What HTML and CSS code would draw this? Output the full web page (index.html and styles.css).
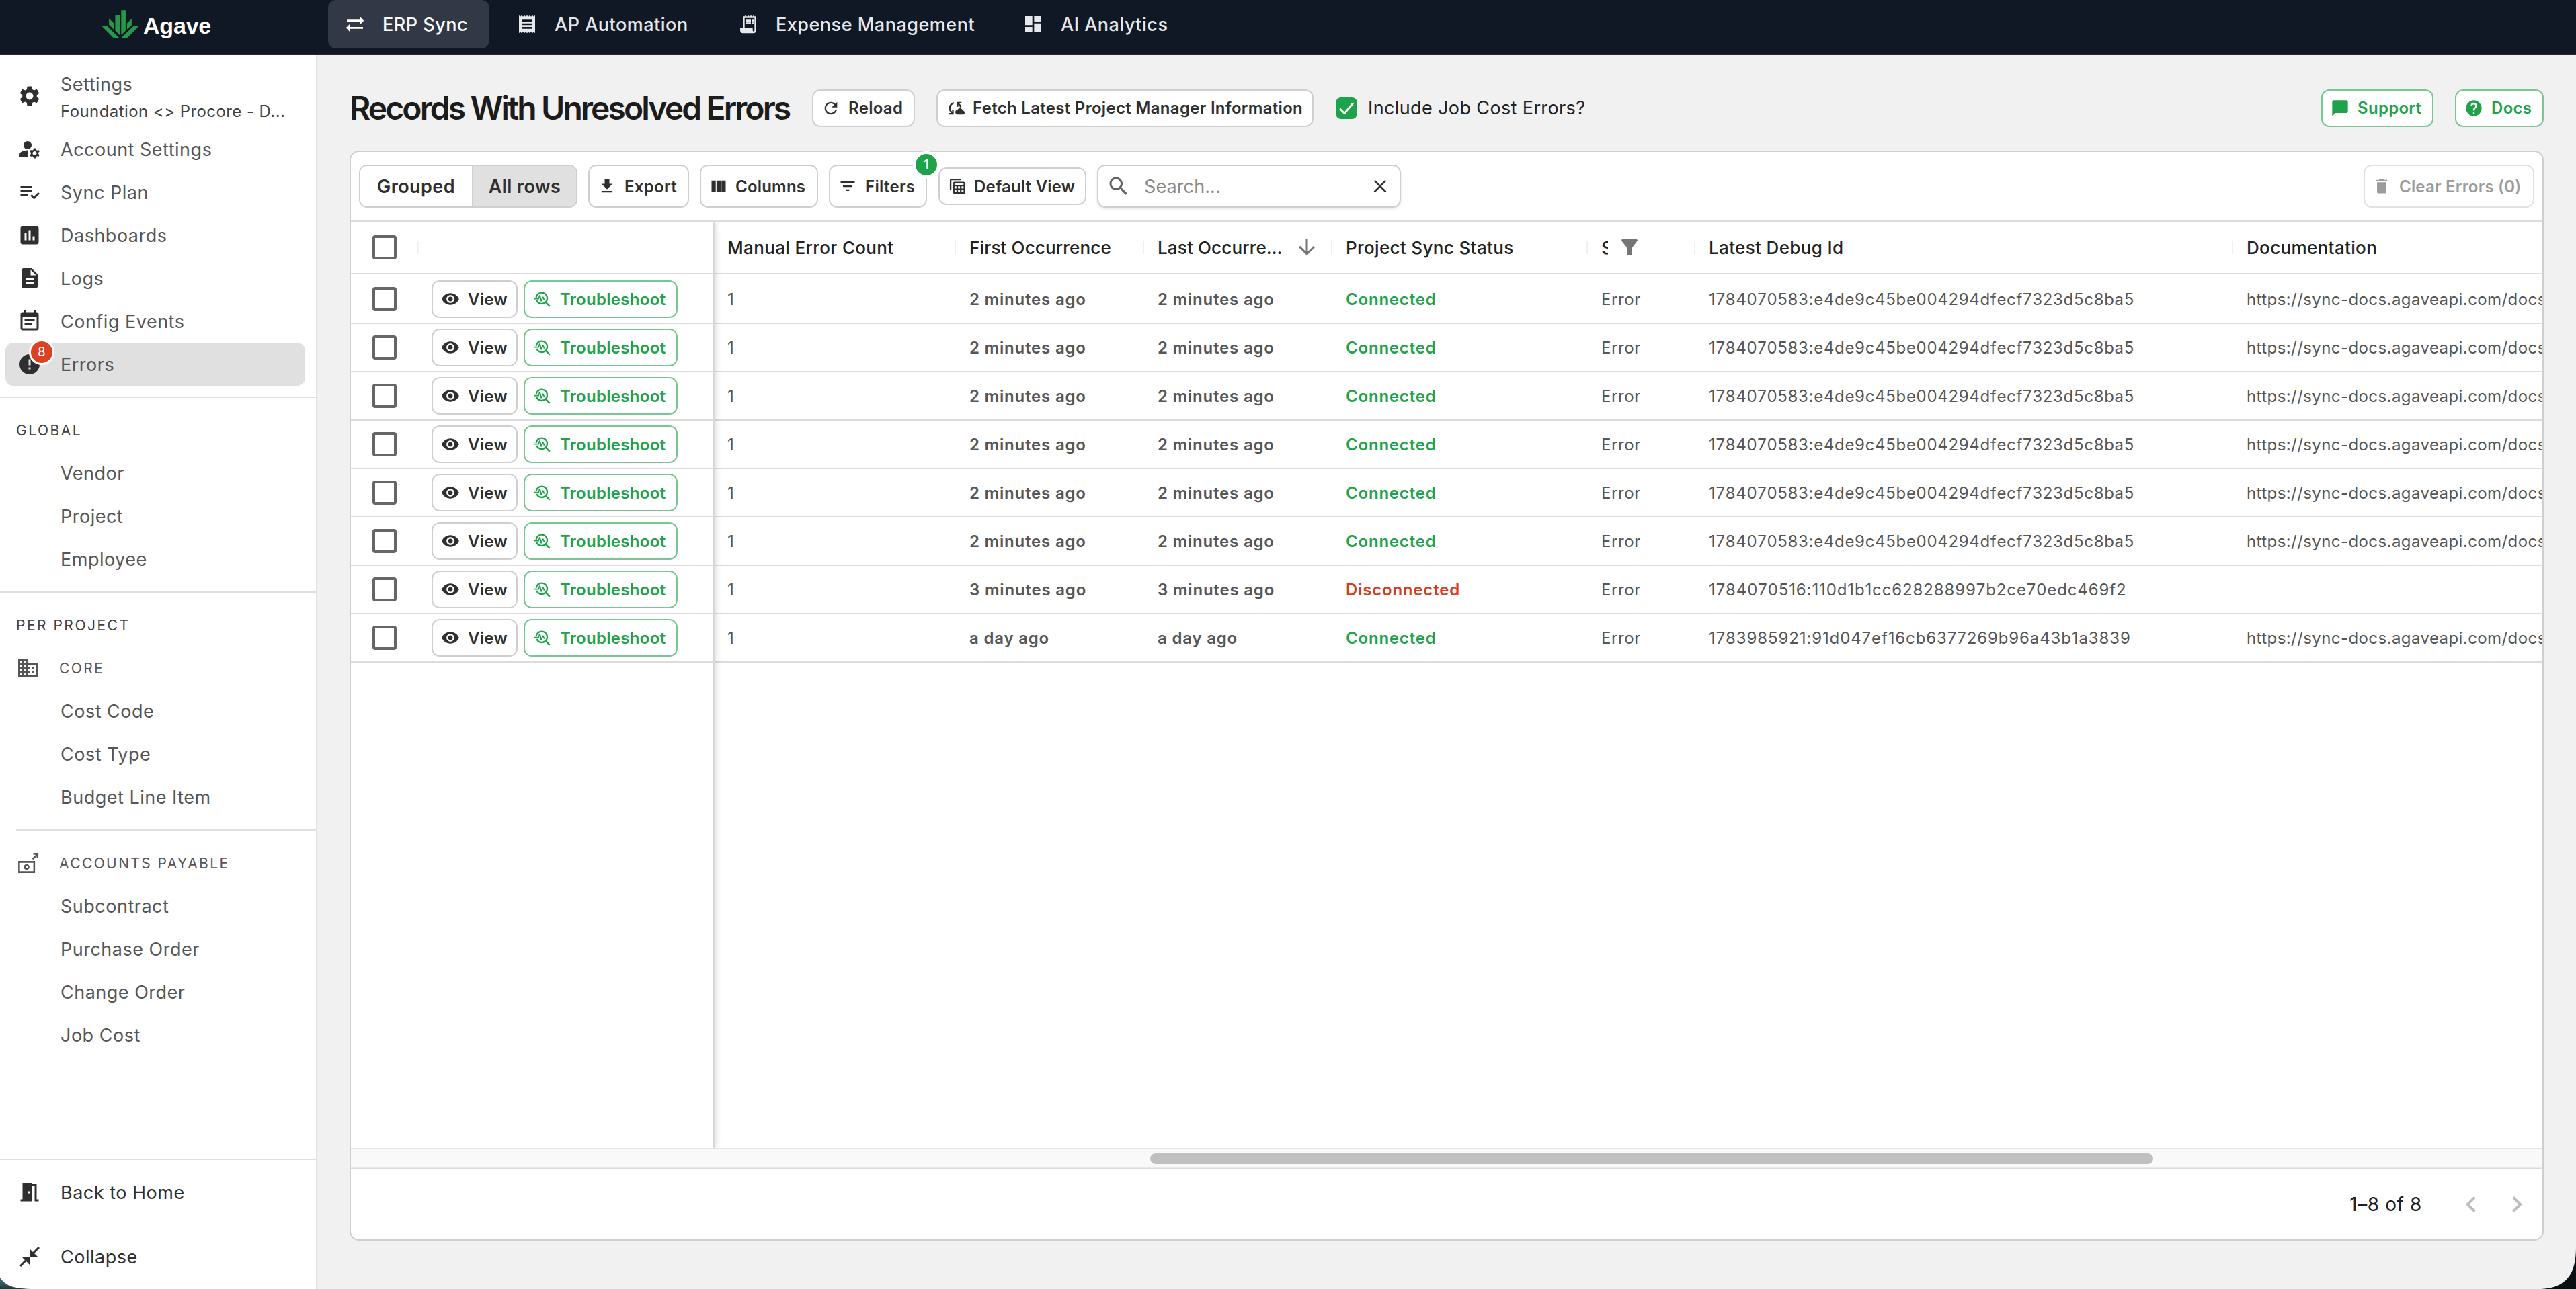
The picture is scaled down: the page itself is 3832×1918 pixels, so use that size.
FILE: index.html
```html
<!DOCTYPE html>
<html lang="en">
<head>
<meta charset="utf-8">
<title>Agave - Errors</title>
<link rel="stylesheet" href="styles.css">
</head>
<body>
<svg class="sprite" aria-hidden="true">
  <symbol id="i-sync" viewBox="0 0 24 24"><path d="M22 8l-4-4v3H3v2h15v3l4-4zM2 16l4 4v-3h15v-2H6v-3l-4 4z"/></symbol>
  <symbol id="i-receipt" viewBox="0 0 24 24"><path d="M18 17H6v-2h12v2zm0-4H6v-2h12v2zm0-4H6V7h12v2zM3 22l1.5-1.5L6 22l1.5-1.5L9 22l1.5-1.5L12 22l1.5-1.5L15 22l1.5-1.5L18 22l1.5-1.5L21 22V2l-1.5 1.5L18 2l-1.5 1.5L15 2l-1.5 1.5L12 2l-1.5 1.5L9 2 7.5 3.5 6 2 4.5 3.5 3 2v20z"/></symbol>
  <symbol id="i-receipt-long" viewBox="0 0 24 24"><path d="M19.5 3.5 18 2l-1.5 1.5L15 2l-1.5 1.5L12 2l-1.5 1.5L9 2 7.5 3.5 6 2v14H3v3c0 1.66 1.34 3 3 3h12c1.66 0 3-1.34 3-3V2l-1.5 1.5zM19 19c0 .55-.45 1-1 1s-1-.45-1-1v-3H8V5h11v14z"/><path d="M9 7h6v2H9zm7 0h2v2h-2zm-7 3h6v2H9zm7 0h2v2h-2z"/></symbol>
  <symbol id="i-dashboard" viewBox="0 0 24 24"><path d="M3 13h8V3H3v10zm0 8h8v-6H3v6zm10 0h8V11h-8v10zm0-18v6h8V3h-8z"/></symbol>
  <symbol id="i-settings" viewBox="0 0 24 24"><path d="M19.14 12.94c.04-.3.06-.61.06-.94 0-.32-.02-.64-.07-.94l2.03-1.58c.18-.14.23-.41.12-.61l-1.92-3.32c-.12-.22-.37-.29-.59-.22l-2.39.96c-.5-.38-1.03-.7-1.62-.94l-.36-2.54c-.04-.24-.24-.41-.48-.41h-3.84c-.24 0-.43.17-.47.41l-.36 2.54c-.59.24-1.13.57-1.62.94l-2.39-.96c-.22-.08-.47 0-.59.22L2.74 8.87c-.12.21-.08.47.12.61l2.03 1.58c-.05.3-.09.63-.09.94s.02.64.07.94l-2.03 1.58c-.18.14-.23.41-.12.61l1.92 3.32c.12.22.37.29.59.22l2.39-.96c.5.38 1.03.7 1.62.94l.36 2.54c.05.24.24.41.48.41h3.84c.24 0 .44-.17.47-.41l.36-2.54c.59-.24 1.13-.56 1.62-.94l2.39.96c.22.08.47 0 .59-.22l1.92-3.32c.12-.22.07-.47-.12-.61l-2.01-1.58zM12 15.6c-1.98 0-3.6-1.62-3.6-3.6s1.62-3.6 3.6-3.6 3.6 1.62 3.6 3.6-1.62 3.6-3.6 3.6z"/></symbol>
  <symbol id="i-account" viewBox="0 0 24 24"><circle cx="10" cy="8" r="4"/><path d="M10.67 13.02C10.45 13.01 10.23 13 10 13c-2.42 0-4.68.67-6.61 1.82-.88.52-1.39 1.5-1.39 2.53V20h9.26c-.79-1.13-1.26-2.51-1.26-4 0-1.07.25-2.07.67-2.98zM20.75 16c0-.22-.03-.42-.06-.63l1.14-1.01-1-1.73-1.45.49c-.32-.27-.68-.48-1.08-.63L18 11h-2l-.3 1.49c-.4.15-.76.36-1.08.63l-1.45-.49-1 1.73 1.14 1.01c-.03.21-.06.41-.06.63s.03.42.06.63l-1.14 1.01 1 1.73 1.45-.49c.32.27.68.48 1.08.63L16 21h2l.3-1.49c.4-.15.76-.36 1.08-.63l1.45.49 1-1.73-1.14-1.01c.03-.21.06-.41.06-.63zM17 18c-1.1 0-2-.9-2-2s.9-2 2-2 2 .9 2 2-.9 2-2 2z"/></symbol>
  <symbol id="i-plan" viewBox="0 0 24 24"><path d="M3 10h11v2H3zm0-4h11v2H3zm0 8h7v2H3zm17.59-2.07-4.25 4.24-2.12-2.12-1.41 1.41L16.34 19 22 13.34z"/></symbol>
  <symbol id="i-chart" viewBox="0 0 24 24"><path d="M19 3H5c-1.1 0-2 .9-2 2v14c0 1.1.9 2 2 2h14c1.1 0 2-.9 2-2V5c0-1.1-.9-2-2-2zM9 17H7v-7h2v7zm4 0h-2V7h2v10zm4 0h-2v-4h2v4z"/></symbol>
  <symbol id="i-doc" viewBox="0 0 24 24"><path d="M14 2H6c-1.1 0-1.99.9-1.99 2L4 20c0 1.1.89 2 1.99 2H18c1.1 0 2-.9 2-2V8l-6-6zm2 16H8v-2h8v2zm0-4H8v-2h8v2zm-3-5V3.5L18.5 9H13z"/></symbol>
  <symbol id="i-event" viewBox="0 0 24 24"><path d="M17 10H7v2h10v-2zm2-7h-1V1h-2v2H8V1H6v2H5c-1.11 0-1.99.9-1.99 2L3 19c0 1.1.89 2 2 2h14c1.1 0 2-.9 2-2V5c0-1.1-.9-2-2-2zm0 16H5V8h14v11zm-5-5H7v2h7v-2z"/></symbol>
  <symbol id="i-error" viewBox="0 0 24 24"><path d="M12 2C6.48 2 2 6.48 2 12s4.48 10 10 10 10-4.48 10-10S17.52 2 12 2zm1 15h-2v-2h2v2zm0-4h-2V7h2v6z"/></symbol>
  <symbol id="i-domain" viewBox="0 0 24 24"><path d="M12 7V3H2v18h20V7H12zM6 19H4v-2h2v2zm0-4H4v-2h2v2zm0-4H4V9h2v2zm0-4H4V5h2v2zm4 12H8v-2h2v2zm0-4H8v-2h2v2zm0-4H8V9h2v2zm0-4H8V5h2v2zm10 12h-8v-2h2v-2h-2v-2h2v-2h-2V9h8v10zm-2-8h-2v2h2v-2zm0 4h-2v2h2v-2z"/></symbol>
  <symbol id="i-payable" viewBox="0 0 24 24"><g fill="none" stroke="currentColor" stroke-width="1.7"><path d="M2.9 10.9h15v10.2h-15z"/><circle cx="10.4" cy="16" r="2"/><path d="M16.3 8.2l4.6-4.6M17 2.9h4.2v4.4"/></g></symbol>
  <symbol id="i-door" viewBox="0 0 24 24"><path d="M14 6v15H3v-2h2V3h9v1h5v15h2v2h-4V6h-3zm-4 5v2h2v-2h-2z"/></symbol>
  <symbol id="i-collapse" viewBox="0 0 24 24"><path d="M22 3.41 16.71 8.7 20 12h-8V4l3.29 3.29L20.59 2 22 3.41zM3.41 22l5.29-5.29L12 20v-8H4l3.29 3.29L2 20.59 3.41 22z"/></symbol>
  <symbol id="i-refresh" viewBox="0 0 24 24"><path d="M17.65 6.35C16.2 4.9 14.21 4 12 4c-4.42 0-7.99 3.58-7.99 8s3.57 8 7.99 8c3.73 0 6.84-2.55 7.73-6h-2.08c-.82 2.33-3.04 4-5.65 4-3.31 0-6-2.69-6-6s2.69-6 6-6c1.66 0 3.14.69 4.22 1.78L13 11h7V4l-2.35 2.35z"/></symbol>
  <symbol id="i-cloud-sync" viewBox="0 0 24 24"><path d="M21.5 14.98c-.02 0-.03 0-.05.01C21.2 13.3 19.76 12 18 12c-1.4 0-2.6.83-3.16 2.02C13.26 14.1 12 15.4 12 17c0 1.66 1.34 3 3 3l6.5-.02c1.38 0 2.5-1.12 2.5-2.5s-1.12-2.5-2.5-2.5zM10 4.26v2.09C7.67 7.18 6 9.39 6 12c0 1.77.78 3.34 2 4.44V14h2v6H4v-2h2.73C5.06 16.54 4 14.4 4 12c0-3.73 2.55-6.85 6-7.74zM20 6h-2.73c1.43 1.26 2.41 3.01 2.66 5h-2.02c-.23-1.36-.93-2.55-1.91-3.44V10h-2V4h6v2z"/></symbol>
  <symbol id="i-check" viewBox="0 0 32 32"><path d="M7 17.5l6 6L25.5 9" fill="none" stroke="#fff" stroke-width="2.8" stroke-linecap="round" stroke-linejoin="round"/></symbol>
  <symbol id="i-download" viewBox="0 0 24 24"><path d="M19 9h-4V3H9v6H5l7 7 7-7zM5 18v2h14v-2H5z"/></symbol>
  <symbol id="i-columns" viewBox="0 0 24 24"><path d="M14.67 5v14H9.33V5h5.34zm1 14H21V5h-5.33v14zm-7.34 0V5H3v14h5.33z"/></symbol>
  <symbol id="i-filter" viewBox="0 0 24 24"><path d="M10 18h4v-2h-4v2zM3 6v2h18V6H3zm3 7h12v-2H6v2z"/></symbol>
  <symbol id="i-view" viewBox="0 0 24 24"><path d="M2.5 4.5c0-1.1.9-2 2-2H17v2H4.500v12.500h-2z"/><path fill-rule="evenodd" d="M8.500 6.500H20c1 0 1.800.8 1.800 1.800V20c0 1-.8 1.800-1.800 1.800H8.500c-1 0-1.800-.8-1.800-1.800V8.300c0-1 .8-1.800 1.800-1.800zM8.500 8.300v2H20v-2zM8.500 12.300v2.800H11v-2.800zM13 12.300v2.800h2.500v-2.800zM17.500 12.300v2.800H20v-2.800zM8.500 17v2.800H11V17zM13 17v2.800h2.500V17zM17.500 17v2.800H20V17z"/></symbol>
  <symbol id="i-search" viewBox="0 0 24 24"><path d="M15.5 14h-.79l-.28-.27C15.41 12.59 16 11.11 16 9.5 16 5.91 13.09 3 9.5 3S3 5.91 3 9.5 5.91 16 9.5 16c1.61 0 3.09-.59 4.23-1.57l.27.28v.79l5 4.99L20.49 19l-4.99-5zm-6 0C7.01 14 5 11.99 5 9.5S7.01 5 9.5 5 14 7.01 14 9.5 11.99 14 9.5 14z"/></symbol>
  <symbol id="i-close" viewBox="0 0 24 24"><path d="M19 6.41 17.59 5 12 10.59 6.41 5 5 6.41 10.59 12 5 17.59 6.41 19 12 13.41 17.59 19 19 17.59 13.41 12z"/></symbol>
  <symbol id="i-trash" viewBox="0 0 24 24"><path d="M6 19c0 1.1.9 2 2 2h8c1.1 0 2-.9 2-2V7H6v12zM19 4h-3.5l-1-1h-5l-1 1H5v2h14V4z"/></symbol>
  <symbol id="i-chat" viewBox="0 0 24 24"><path d="M20 2H4c-1.1 0-2 .9-2 2v18l4-4h14c1.1 0 2-.9 2-2V4c0-1.1-.9-2-2-2z"/></symbol>
  <symbol id="i-help" viewBox="0 0 24 24"><path d="M12 2C6.48 2 2 6.48 2 12s4.48 10 10 10 10-4.48 10-10S17.52 2 12 2zm1 17h-2v-2h2v2zm2.07-7.75-.9.92C13.45 12.9 13 13.5 13 15h-2v-.5c0-1.1.45-2.1 1.17-2.83l1.24-1.26c.37-.36.59-.86.59-1.41 0-1.1-.9-2-2-2s-2 .9-2 2H8c0-2.21 1.79-4 4-4s4 1.79 4 4c0 .88-.36 1.68-.93 2.25z"/></symbol>
  <symbol id="i-eye" viewBox="0 0 24 24"><path d="M12 4.5C7 4.5 2.73 7.61 1 12c1.73 4.39 6 7.5 11 7.5s9.27-3.11 11-7.5c-1.73-4.39-6-7.5-11-7.5zM12 17c-2.76 0-5-2.24-5-5s2.24-5 5-5 5 2.24 5 5-2.24 5-5 5zm0-8c-1.66 0-3 1.34-3 3s1.34 3 3 3 3-1.34 3-3-1.34-3-3-3z"/></symbol>
  <symbol id="i-trouble" viewBox="0 0 24 24"><path d="M22 20.59l-4.69-4.69C18.37 14.55 19 12.85 19 11c0-4.42-3.58-8-8-8-4.08 0-7.44 3.05-7.93 7h2.02C5.57 7.17 8.03 5 11 5c3.31 0 6 2.69 6 6s-2.69 6-6 6c-2.42 0-4.5-1.44-5.45-3.5H3.4C4.45 16.69 7.46 19 11 19c1.85 0 3.55-.63 4.9-1.69L20.59 22 22 20.59z"/><path d="M8.43 9.69 9.65 15h1.64l1.26-3.78.95 2.28h2V12h-1l-1.25-3h-1.54l-1.12 3.37L9.35 7H7.7l-1.25 4H1v1.5h6.55l.88-2.81z"/></symbol>
  <symbol id="i-down" viewBox="0 0 24 24"><path d="M20 12l-1.41-1.41L13 16.17V4h-2v12.170l-5.580-5.590L4 12l8 8 8-8z"/></symbol>
  <symbol id="i-funnel" viewBox="0 0 24 24"><path d="M4.25 5.61C6.27 8.2 10 13 10 13v6c0 .55.45 1 1 1h2c.55 0 1-.45 1-1v-6s3.72-4.8 5.74-7.39c.51-.66.04-1.61-.79-1.61H5.04c-.83 0-1.3.95-.79 1.61z"/></symbol>
  <symbol id="i-left" viewBox="0 0 24 24"><path d="M15.41 7.41 14 6l-6 6 6 6 1.410-1.410L10.830 12z"/></symbol>
  <symbol id="i-right" viewBox="0 0 24 24"><path d="M10 6 8.590 7.410 13.170 12l-4.580 4.590L10 18l6-6z"/></symbol>
</svg>

<header class="topbar">
  <div class="brand">
    <svg class="brand-mark" viewBox="33 26 168 127"><path d="M121 27h20v91l-20 20zM94 49h20v89l-20-20zM66 63l21 21v28L66 92zM168 65v29l-21 18V85zM33 97h24l55 54H86zM201 97h-24l-56 54h27z"/></svg>
    <span class="brand-name">Agave</span>
  </div>
  <nav class="tabs">
    <a class="tab tab-erp active"><svg class="ic32"><use href="#i-sync"/></svg>ERP Sync</a>
    <a class="tab tab-ap"><svg class="ic32"><use href="#i-receipt"/></svg>AP Automation</a>
    <a class="tab tab-expense"><svg class="ic32"><use href="#i-receipt-long"/></svg>Expense Management</a>
    <a class="tab tab-ai"><svg class="ic32"><use href="#i-dashboard"/></svg>AI Analytics</a>
  </nav>
</header>

<div class="shell">
  <aside class="sidebar">
    <div class="nav-main">
      <a class="nav-item nav-settings"><svg class="ic36"><use href="#i-settings"/></svg><span class="nav-stack"><span>Settings</span><span class="nav-sub">Foundation &lt;&gt; Procore - D...</span></span></a>
      <a class="nav-item"><svg class="ic36"><use href="#i-account"/></svg>Account Settings</a>
      <a class="nav-item"><svg class="ic36"><use href="#i-plan"/></svg>Sync Plan</a>
      <a class="nav-item"><svg class="ic36"><use href="#i-chart"/></svg>Dashboards</a>
      <a class="nav-item"><svg class="ic36"><use href="#i-doc"/></svg>Logs</a>
      <a class="nav-item"><svg class="ic36"><use href="#i-event"/></svg>Config Events</a>
      <a class="nav-item selected"><svg class="ic36"><use href="#i-error"/></svg>Errors<span class="nav-badge">8</span></a>
    </div>
    <section class="group">
      <h2 class="group-title">GLOBAL</h2>
      <a class="nav-item plain">Vendor</a>
      <a class="nav-item plain">Project</a>
      <a class="nav-item plain">Employee</a>
    </section>
    <section class="group">
      <h2 class="group-title">PER PROJECT</h2>
      <h3 class="sub-title"><svg class="ic36"><use href="#i-domain"/></svg>CORE</h3>
      <a class="nav-item plain">Cost Code</a>
      <a class="nav-item plain">Cost Type</a>
      <a class="nav-item plain">Budget Line Item</a>
      <h3 class="sub-title ruled"><svg class="ic36"><use href="#i-payable"/></svg>ACCOUNTS PAYABLE</h3>
      <a class="nav-item plain">Subcontract</a>
      <a class="nav-item plain">Purchase Order</a>
      <a class="nav-item plain">Change Order</a>
      <a class="nav-item plain">Job Cost</a>
    </section>
    <div class="nav-foot">
      <a class="nav-item dark"><svg class="ic36"><use href="#i-door"/></svg>Back to Home</a>
      <a class="nav-item dark"><svg class="ic36"><use href="#i-collapse"/></svg>Collapse</a>
    </div>
  </aside>

  <main class="main">
    <div class="page-head">
      <h1 class="page-title">Records With Unresolved Errors</h1>
      <button class="btn w-reload"><svg class="ic28"><use href="#i-refresh"/></svg>Reload</button>
      <button class="btn w-fetch"><svg class="ic28"><use href="#i-cloud-sync"/></svg>Fetch Latest Project Manager Information</button>
      <label class="check-label"><svg class="check-on"><use href="#i-check"/></svg>Include Job Cost Errors?</label>
      <button class="btn green w-support"><svg class="ic28"><use href="#i-chat"/></svg>Support</button>
      <button class="btn green w-docs"><svg class="ic28"><use href="#i-help"/></svg>Docs</button>
    </div>

    <div class="card">
      <div class="toolbar">
        <div class="segmented"><button class="seg">Grouped</button><button class="seg on">All rows</button></div>
        <button class="btn tall w-export"><svg class="ic28"><use href="#i-download"/></svg>Export</button>
        <button class="btn tall w-columns"><svg class="ic28"><use href="#i-columns"/></svg>Columns</button>
        <button class="btn tall w-filters"><svg class="ic28"><use href="#i-filter"/></svg>Filters<span class="count">1</span></button>
        <button class="btn w-view"><svg class="ic28"><use href="#i-view"/></svg>Default View</button>
        <div class="search"><svg class="ic36"><use href="#i-search"/></svg><span class="placeholder">Search...</span><svg class="ic32"><use href="#i-close"/></svg></div>
        <button class="btn tall disabled w-clear"><svg class="ic28"><use href="#i-trash"/></svg>Clear Errors (0)</button>
      </div>

      <div class="grid">
        <div class="pinned">
          <div class="row head"><span class="box"></span><span class="tick"></span></div>
          <div class="row"><span class="box"></span><button class="btn w-eye"><svg class="ic28"><use href="#i-eye"/></svg>View</button><button class="btn green w-trouble"><svg class="ic28"><use href="#i-trouble"/></svg>Troubleshoot</button></div>
          <div class="row"><span class="box"></span><button class="btn w-eye"><svg class="ic28"><use href="#i-eye"/></svg>View</button><button class="btn green w-trouble"><svg class="ic28"><use href="#i-trouble"/></svg>Troubleshoot</button></div>
          <div class="row"><span class="box"></span><button class="btn w-eye"><svg class="ic28"><use href="#i-eye"/></svg>View</button><button class="btn green w-trouble"><svg class="ic28"><use href="#i-trouble"/></svg>Troubleshoot</button></div>
          <div class="row"><span class="box"></span><button class="btn w-eye"><svg class="ic28"><use href="#i-eye"/></svg>View</button><button class="btn green w-trouble"><svg class="ic28"><use href="#i-trouble"/></svg>Troubleshoot</button></div>
          <div class="row"><span class="box"></span><button class="btn w-eye"><svg class="ic28"><use href="#i-eye"/></svg>View</button><button class="btn green w-trouble"><svg class="ic28"><use href="#i-trouble"/></svg>Troubleshoot</button></div>
          <div class="row"><span class="box"></span><button class="btn w-eye"><svg class="ic28"><use href="#i-eye"/></svg>View</button><button class="btn green w-trouble"><svg class="ic28"><use href="#i-trouble"/></svg>Troubleshoot</button></div>
          <div class="row"><span class="box"></span><button class="btn w-eye"><svg class="ic28"><use href="#i-eye"/></svg>View</button><button class="btn green w-trouble"><svg class="ic28"><use href="#i-trouble"/></svg>Troubleshoot</button></div>
          <div class="row"><span class="box"></span><button class="btn w-eye"><svg class="ic28"><use href="#i-eye"/></svg>View</button><button class="btn green w-trouble"><svg class="ic28"><use href="#i-trouble"/></svg>Troubleshoot</button></div>
        </div>
        <div class="scroller">
          <div class="cells head">
            <span class="th">Manual Error Count</span><span class="th th-tight">First Occurrence</span><span class="th th-tight">Last Occurre…<svg class="ic36 th-sort"><use href="#i-down"/></svg></span><span class="th">Project Sync Status</span><span class="th"><span class="cut">S</span><svg class="ic36 th-funnel"><use href="#i-funnel"/></svg></span><span class="th">Latest Debug Id</span><span class="th last">Documentation</span>
          </div>
          <div class="cells"><span>1</span><b>2 minutes ago</b><b>2 minutes ago</b><b class="ok">Connected</b><span>Error</span><span class="debug">1784070583:e4de9c45be004294dfecf7323d5c8ba5</span><span class="url">https://sync-docs.agaveapi.com/docs</span></div>
          <div class="cells"><span>1</span><b>2 minutes ago</b><b>2 minutes ago</b><b class="ok">Connected</b><span>Error</span><span class="debug">1784070583:e4de9c45be004294dfecf7323d5c8ba5</span><span class="url">https://sync-docs.agaveapi.com/docs</span></div>
          <div class="cells"><span>1</span><b>2 minutes ago</b><b>2 minutes ago</b><b class="ok">Connected</b><span>Error</span><span class="debug">1784070583:e4de9c45be004294dfecf7323d5c8ba5</span><span class="url">https://sync-docs.agaveapi.com/docs</span></div>
          <div class="cells"><span>1</span><b>2 minutes ago</b><b>2 minutes ago</b><b class="ok">Connected</b><span>Error</span><span class="debug">1784070583:e4de9c45be004294dfecf7323d5c8ba5</span><span class="url">https://sync-docs.agaveapi.com/docs</span></div>
          <div class="cells"><span>1</span><b>2 minutes ago</b><b>2 minutes ago</b><b class="ok">Connected</b><span>Error</span><span class="debug">1784070583:e4de9c45be004294dfecf7323d5c8ba5</span><span class="url">https://sync-docs.agaveapi.com/docs</span></div>
          <div class="cells"><span>1</span><b>2 minutes ago</b><b>2 minutes ago</b><b class="ok">Connected</b><span>Error</span><span class="debug">1784070583:e4de9c45be004294dfecf7323d5c8ba5</span><span class="url">https://sync-docs.agaveapi.com/docs</span></div>
          <div class="cells"><span>1</span><b>3 minutes ago</b><b>3 minutes ago</b><b class="bad">Disconnected</b><span>Error</span><span class="debug loose">1784070516:110d1b1cc628288997b2ce70edc469f2</span><span></span></div>
          <div class="cells"><span>1</span><b>a day ago</b><b>a day ago</b><b class="ok">Connected</b><span>Error</span><span class="debug loose">1783985921:91d047ef16cb6377269b96a43b1a3839</span><span class="url">https://sync-docs.agaveapi.com/docs</span></div>
        </div>
      </div>
      <div class="hscroll"><div class="thumb"></div></div>
      <div class="footer"><span class="range">1–8 of 8</span><svg class="ic48"><use href="#i-left"/></svg><svg class="ic48 next"><use href="#i-right"/></svg></div>
    </div>
  </main>
</div>

<svg class="corner corner-left" viewBox="0 0 52 17"><defs><linearGradient id="cg" x1="0" y1="0" x2="0" y2="1"><stop offset="0" stop-color="#3f7286"/><stop offset=".6" stop-color="#2f5560"/><stop offset="1" stop-color="#26352f"/></linearGradient></defs><path fill="url(#cg)" d="M0 0C8 11 17 17 52 17H0z"/></svg>
<svg class="corner corner-right" viewBox="0 0 58 62"><path fill="#0a0f11" d="M58 0C58 40 44 62 0 62H58z"/></svg>
</body>
</html>
```
FILE: styles.css
```css
* { box-sizing: border-box; }
body {
  margin: 0;
  width: 3832px;
  height: 1918px;
  overflow: hidden;
  display: flex;
  flex-direction: column;
  background: #f1f1f1;
  color: #212121;
  font-family: Inter, "Noto Sans", sans-serif;
  font-size: 27px;
}
svg { display: block; flex: none; fill: currentColor; }
button { font-family: inherit; margin: 0; }
.sprite { position: absolute; width: 0; height: 0; }
.ic28 { width: 28px; height: 28px; }
.ic32 { width: 32px; height: 32px; }
.ic36 { width: 36px; height: 36px; }
.ic48 { width: 48px; height: 48px; }

/* Top bar */
.topbar {
  height: 82px;
  flex: none;
  display: flex;
  background: #111825;
  border-bottom: 2px solid #272531;
}
.brand { width: 488px; padding: 15px 0 0 151px; display: flex; gap: 6px; }
.brand-mark { width: 56px; height: 42px; fill: #27984a; }
.brand-name { font: 700 34px/46px "Liberation Sans", sans-serif; letter-spacing: -.2px; color: #fff; }
.tabs { display: flex; }
.tab {
  height: 72px;
  padding-left: 24px;
  display: flex;
  align-items: center;
  gap: 25px;
  border-radius: 12px;
  font-weight: 500;
  letter-spacing: .5px;
  color: #e6e8ec;
  white-space: nowrap;
}
.tab.active { background: #323846; color: #fff; }
.tab-erp { width: 240px; margin-right: 16px; }
.tab-ap { width: 313px; margin-right: 16px; }
.tab-expense { width: 408px; margin-right: 16px; }

/* Sidebar */
.shell { flex: 1; display: flex; min-height: 0; }
.sidebar {
  width: 472px;
  flex: none;
  display: flex;
  flex-direction: column;
  background: #fff;
  border-right: 2px solid #e0e0e0;
}
.nav-main { padding: 14px 16px 16px 8px; }
.nav-item {
  position: relative;
  height: 64px;
  padding-left: 18px;
  display: flex;
  align-items: center;
  gap: 28px;
  border-radius: 12px;
  letter-spacing: .5px;
  color: #565656;
  white-space: nowrap;
}
.nav-item svg { color: #2f2f2f; }
.nav-settings { height: 94px; }
.nav-stack { display: flex; flex-direction: column; line-height: 40px; margin-top: 5px; }
.nav-sub { font-size: 24px; letter-spacing: .43px; color: #424242; }
.nav-item.selected { background: #e0e0e0; }
.nav-item.plain { padding-left: 90px; }
.nav-item.dark { color: #2f2f2f; padding-left: 26px; }
.nav-badge {
  position: absolute;
  left: 35px;
  top: -5px;
  width: 38px;
  height: 38px;
  border: 3px solid #fff;
  border-radius: 50%;
  background: #dd4124;
  color: #fff;
  font-size: 19px;
  line-height: 32px;
  text-align: center;
  letter-spacing: 0;
}
.group { border-top: 2px solid #e0e0e0; padding: 16px 0; }
.group-title, .sub-title {
  margin: 0;
  height: 64px;
  display: flex;
  align-items: center;
  font-size: 21px;
  font-weight: 400;
  letter-spacing: 2.4px;
  color: #565656;
}
.group-title { padding-left: 24px; letter-spacing: 2.5px; color: #404040; }
.sub-title { padding-left: 24px; gap: 28px; }
.sub-title.ruled { height: 82px; margin: 16px 0 0 24px; padding: 16px 0 0; border-top: 2px solid #e0e0e0; }
.nav-foot {
  margin-top: auto;
  height: 194px;
  padding-top: 16px;
  display: flex;
  flex-direction: column;
  gap: 32px;
  border-top: 2px solid #e0e0e0;
}

/* Page heading */
.main { flex: 1; min-width: 0; padding: 0 48px 72px 48px; display: flex; flex-direction: column; }
.page-head { height: 142px; padding-top: 15px; display: flex; align-items: center; flex: none; }
.page-title { margin: 0; width: 688px; font-size: 48px; font-weight: 600; letter-spacing: -2.9px; white-space: nowrap; color: #1c1c1c; }
.btn {
  position: relative;
  height: 56px;
  flex: none;
  padding: 0 0 0 12px;
  display: flex;
  align-items: center;
  gap: 12px;
  border: 2px solid #cfcfcf;
  border-radius: 12px;
  background: #fff;
  color: #2f2f2f;
  font-size: 24px;
  font-weight: 600;
  letter-spacing: .3px;
  white-space: nowrap;
}
.btn.tall { height: 64px; }
.btn.green { border-color: #78c793; color: #1fa34a; }
.btn.disabled { border-color: #e2e2e2; color: #9b9b9b; }
.w-reload { width: 153px; }
.w-fetch { width: 561px; margin-left: 32px; }
.w-support { width: 167px; margin-left: auto; }
.w-docs { width: 132px; margin-left: 32px; }
.check-label { margin-left: 33px; display: flex; align-items: center; gap: 16px; letter-spacing: .38px; }
.check-on { width: 32px; height: 32px; border-radius: 8px; background: #1fa34a; }

/* Card and toolbar */
.card {
  flex: 1;
  min-height: 0;
  display: flex;
  flex-direction: column;
  background: #fff;
  border: 2px solid #cfcfcf;
  border-radius: 14px;
}
.toolbar { height: 104px; flex: none; padding: 0 12px; display: flex; align-items: center; gap: 16px; border-bottom: 2px solid #dcdcdc; }
.segmented { display: flex; height: 64px; width: 325px; border: 2px solid #cfcfcf; border-radius: 12px; overflow: hidden; }
.seg { width: 166px; padding: 0; border: 0; background: #fff; color: #2f2f2f; font-size: 27px; font-weight: 600; letter-spacing: .4px; }
.seg.on { flex: 1; background: #e0e0e0; border-left: 2px solid #cfcfcf; }
.w-export { width: 150px; }
.w-columns { width: 176px; }
.w-filters { width: 146px; }
.w-view { width: 220px; margin-left: 1px; letter-spacing: .2px; }
.w-clear { width: 254px; margin-left: auto; padding-left: 11px; letter-spacing: .2px; }
.w-columns { letter-spacing: .2px; }
.w-view, .w-columns { gap: 11px; }
.count {
  position: absolute;
  right: -21px;
  top: -22px;
  width: 40px;
  height: 40px;
  border: 4px solid #fff;
  border-radius: 50%;
  background: #1fa34a;
  color: #fff;
  font-size: 20px;
  font-weight: 500;
  line-height: 32px;
  text-align: center;
}
.search {
  width: 452px;
  height: 64px;
  padding: 0 13px 0 12px;
  display: flex;
  align-items: center;
  gap: 20px;
  border: 2px solid #cfcfcf;
  border-radius: 12px;
  color: #2f2f2f;
  box-shadow: 0 2px 4px rgba(0, 0, 0, .1);
}
.search svg:first-child { color: #616161; }
.placeholder { flex: 1; color: #8a8a8a; letter-spacing: .1px; }

/* Data grid */
.grid { flex: 1; min-height: 0; display: flex; }
.pinned {
  position: relative;
  z-index: 1;
  width: 541px;
  flex: none;
  border-right: 2px solid #d8d8d8;
  box-shadow: 2px 0 8px rgba(0, 0, 0, .14);
  clip-path: inset(0 -16px 0 0);
}
.row { height: 72px; padding-left: 32px; display: flex; align-items: center; border-bottom: 2px solid #dcdcdc; }
.row.head, .cells.head { height: 78px; margin-bottom: 2px; }
.box { width: 36px; height: 36px; flex: none; border: 4px solid #666; border-radius: 4px; }
.tick { width: 2px; height: 20px; margin-left: 31px; background: #f3f3f3; }
.w-eye { width: 128px; margin-left: 52px; }
.w-trouble { width: 229px; margin-left: 9px; }
.scroller { flex: 1; min-width: 0; overflow: hidden; }
.cells {
  height: 72px;
  display: grid;
  grid-template-columns: 359px 280px 280px 380px 160px 800px 460px;
  align-items: center;
  border-bottom: 2px solid #dcdcdc;
  font-size: 24px;
  letter-spacing: .6px;
  color: #565656;
  white-space: nowrap;
}
.cells > * { padding-left: 20px; }
.cells > :first-child { padding-left: 19px; }
.cells b { font-weight: 600; letter-spacing: .8px; }
.cells .debug { font-kerning: none; font-feature-settings: "calt" 0; letter-spacing: .68px; }
.cells .debug.loose { letter-spacing: .88px; }
.cells .url { letter-spacing: .42px; }
.cells .ok { color: #1fa34a; }
.cells .bad { color: #d63c22; }
.th { height: 20px; display: flex; align-items: center; border-right: 2px solid #f0f0f0; font-size: 26px; font-weight: 500; letter-spacing: .35px; color: #212121; }
.th-tight { letter-spacing: .15px; }
.th.last { border-right: 0; }
.th-sort { margin-left: auto; margin-right: 18px; color: #757575; }
.cut { width: 10px; overflow: hidden; }
.th-funnel { margin-left: 14px; color: #757575; }

.hscroll { height: 32px; flex: none; padding: 6px 0 0 1189px; background: #f9f9f9; border-top: 2px solid #e4e4e4; border-bottom: 2px solid #dadada; box-shadow: inset 0 -2px #e9e9e9; }
.thumb { width: 1492px; height: 16px; border-radius: 8px; background: #c0c0c0; }
.footer { height: 104px; flex: none; padding-right: 14px; display: flex; align-items: center; justify-content: flex-end; color: #212121; }
.range { margin-right: 49px; letter-spacing: .6px; font-size: 28px; }
.footer svg { color: #bdbdbd; }
.next { margin-left: 20px; }

/* Rounded window corners over the desktop */
.corner { position: absolute; bottom: 0; }
.corner-left { left: 0; width: 52px; height: 17px; }
.corner-right { right: 0; width: 58px; height: 62px; }
```
